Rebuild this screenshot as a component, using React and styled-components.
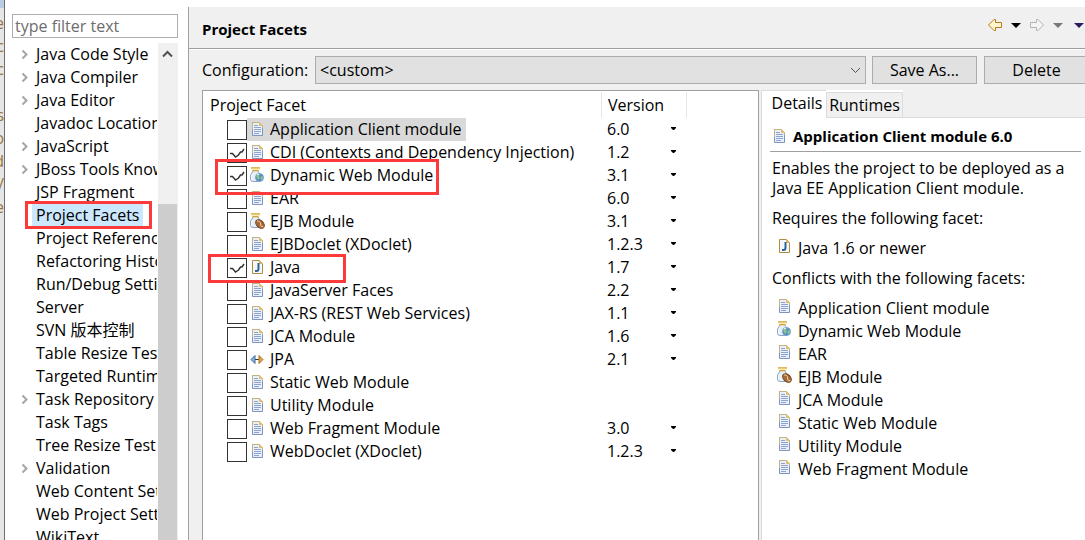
import React from 'react';
import styled, { createGlobalStyle } from 'styled-components';

const GlobalStyle = createGlobalStyle`
    * {
        box-sizing: border-box;
    }

    body {
        margin: 0;
        background: #fff;
    }

    body, button, input, select, table {
        font-family: "Open Sans", "Noto Sans CJK SC", sans-serif;
        font-size: 16px;
        line-height: 20px;
        color: #000;
    }
`;

const Window = styled.div`
    display: flex;
    height: 100vh;
    overflow: hidden;
`;

/* sliver of the editor that lies behind the dialog */
const Backdrop = styled.div`
    flex: none;
    width: 5px;
    padding-top: 12px;
    overflow: hidden;
    border-right: 1px solid #6e6e6e;
    background: linear-gradient(#b9cce2 8px, #e6e6e6 8px);
`;

const BackdropLine = styled.div`
    display: flex;
    justify-content: flex-end;
    height: 23px;
    line-height: 23px;
    color: #97753c;
`;

const Sidebar = styled.nav`
    display: flex;
    flex: none;
    flex-direction: column;
    width: 183px;
    padding: 14px 10px 0 7px;
`;

const Filter = styled.input`
    flex: none;
    width: 100%;
    height: 24px;
    margin-bottom: 5px;
    padding: 0 2px;
    border: 1px solid #abadb3;
    border-radius: 0;
    outline: 0;

    &::placeholder {
        color: #6d6d6d;
        opacity: 1;
    }
`;

const TreeArea = styled.div`
    display: flex;
    flex: 1;
    min-height: 0;
`;

const Tree = styled.ul`
    flex: 1;
    min-width: 0;
    margin: 0 1px 0 0;
    padding: 0;
    overflow: hidden;
    list-style: none;
`;

const TreeItem = styled.li`
    position: relative;
    display: flex;
    align-items: center;
    height: 23px;
    padding-left: 9px;
    white-space: nowrap;
`;

const Twisty = styled.span`
    display: flex;
    flex: none;
    width: 11px;
`;

const TreeLabel = styled.span`
    padding: 0 4px;
    line-height: 23px;
    background: ${({ $selected }) => ($selected ? '#cce8ff' : 'transparent')};
`;

const ScrollBar = styled.div`
    display: flex;
    flex: none;
    flex-direction: column;
    width: 20px;
    padding-right: 1px;
    background: #f0f0f0;
`;

const ScrollUp = styled.button`
    display: flex;
    flex: none;
    align-items: flex-start;
    justify-content: center;
    height: 161px;
    padding: 7px 0 0;
    border: 0;
    background: none;
`;

const ScrollThumb = styled.div`
    flex: 1;
    background: #cdcdcd;
`;

const Marker = styled.span`
    position: absolute;
    z-index: 1;
    border: 3px solid #fd3a3a;
    pointer-events: none;
`;

const TreeMarker = styled(Marker)`
    inset: -3px 5px -2px 13px;
`;

const WebMarker = styled(Marker)`
    inset: -5px 163px -8px 12px;
`;

const JavaMarker = styled(Marker)`
    inset: -2px 256px -4px 5px;
`;

const Page = styled.main`
    display: flex;
    flex: 1;
    flex-direction: column;
    min-width: 0;
    margin-top: 7px;
    border-left: 1px solid #a0a0a0;
    background: #f0f0f0;
    overflow: hidden;
`;

const PageHeader = styled.header`
    display: flex;
    flex: none;
    align-items: center;
    justify-content: space-between;
    height: 42px;
    padding: 0 0 0 13px;
    border-bottom: 1px solid #a0a0a0;
    box-shadow: 0 1px #fff;
`;

const PageTitle = styled.h1`
    margin: 0;
    padding-top: 2px;
    font-size: 15px;
    font-weight: 700;
`;

const HistoryBar = styled.div`
    display: flex;
    align-items: center;
    gap: 8px;
    padding: 0 1px 5px 0;

    > :last-child {
        margin-left: 3px;
    }
`;

const ToolButton = styled.button`
    display: flex;
    align-items: center;
    padding: 0;
    border: 0;
    background: none;
`;

const ConfigBar = styled.div`
    display: flex;
    flex: none;
    align-items: center;
    height: 28px;
    margin: 7px -4px 6px 13px;
`;

const ConfigLabel = styled.label`
    flex: none;
    width: 113px;
`;

const SelectBox = styled.div`
    display: grid;
    flex: 1;
    align-items: center;
    margin-right: 6px;

    > * {
        grid-area: 1 / 1;
    }

    svg {
        justify-self: end;
        margin-right: 5px;
        pointer-events: none;
    }
`;

const Select = styled.select`
    width: 100%;
    height: 28px;
    padding: 0 4px;
    border: 1px solid #acacac;
    border-radius: 0;
    background: #e1e1e1;
    appearance: none;
`;

const PushButton = styled.button`
    flex: none;
    width: 105px;
    height: 28px;
    padding: 0;
    border: 1px solid #acacac;
    background: #e1e1e1;

    & + & {
        margin-left: 7px;
    }
`;

const Columns = styled.div`
    display: grid;
    flex: 1;
    grid-template-columns: minmax(0, 557fr) minmax(0, 324fr);
    gap: 2px;
    min-height: 0;
    padding-left: 13px;
`;

const FacetPanel = styled.section`
    border: 1px solid #a0a0a0;
    border-bottom: 0;
    background: #fff;
`;

const FacetTable = styled.table`
    width: 100%;
    border-collapse: collapse;
    table-layout: fixed;

    th, td {
        padding: 0;
        text-align: left;
        white-space: nowrap;
    }
`;

const HeadCell = styled.th`
    width: ${({ $width }) => $width};
    height: 27px;
    font-weight: 400;

    > span {
        display: block;
        height: 26px;
        padding-left: ${({ $indent }) => $indent};
        border-right: 1px solid ${({ $last }) => ($last ? 'transparent' : '#e5e5e5')};
        line-height: 26px;
    }
`;

const FacetCell = styled.td`
    position: relative;
    height: 23px;
`;

const FacetRow = styled.div`
    display: flex;
    align-items: center;
    height: 23px;
    padding-left: 24px;
`;

const Tick = styled.input`
    flex: none;
    width: 20px;
    height: 20px;
    margin: 0;
    border: 1px solid #333;
    background: #fff;
    appearance: none;

    &:checked {
        background: #fff url("data:image/svg+xml,%3Csvg xmlns='http://www.w3.org/2000/svg' viewBox='0 0 18 18'%3E%3Cpath d='M2 9.500h2.500l3 3.500 3-2 2-3h1.500l2-3' fill='none' stroke='%23333' stroke-width='1.500'/%3E%3C/svg%3E");
    }
`;

const FacetLabel = styled.label`
    display: flex;
    align-items: center;
    gap: 5px;
    height: 23px;
    padding: 0 4px 2px 2px;
    background: ${({ $selected }) => ($selected ? '#d9d9d9' : 'transparent')};
`;

const VersionBox = styled.div`
    display: flex;
    align-items: center;
    justify-content: space-between;
    padding: 0 11px 2px 5px;
`;

const Folder = styled.section`
    display: flex;
    flex-direction: column;
    border-left: 1px solid #dcdcdc;
    background: #fff;
`;

const TabBar = styled.div`
    display: flex;
    align-items: stretch;
    height: 28px;
`;

const Tab = styled.button`
    flex: none;
    width: ${({ $active }) => ($active ? '64px' : '77px')};
    padding: ${({ $active }) => ($active ? '0 0 4px 6px' : '0')};
    border: 1px solid #dcdcdc;
    border-width: ${({ $active }) => ($active ? '1px 0 0' : '1px')};
    margin-top: ${({ $active }) => ($active ? '0' : '2px')};
    background: ${({ $active }) => ($active ? '#fff' : '#f0f0f0')};
    white-space: nowrap;
`;

const TabFill = styled.div`
    flex: 1;
    border-bottom: 1px solid #dcdcdc;
    background: #f0f0f0;
`;

const Details = styled.div`
    padding: 8px 4px 0 8px;
`;

const DetailsTitle = styled.h2`
    display: flex;
    align-items: center;
    gap: 6px;
    height: 26px;
    margin: 0 0 6px;
    padding: 0 0 6px 1px;
    border-bottom: 1px solid #a0a0a0;
    font-size: 15px;
    font-weight: 700;
`;

const Paragraph = styled.p`
    margin: 0 0 10px;
    padding-left: 2px;
`;

const FacetList = styled.ul`
    margin: -2px 0 9px;
    padding: 0 0 0 6px;
    list-style: none;
`;

const FacetListItem = styled.li`
    display: flex;
    align-items: center;
    gap: 6px;
    height: 23px;

    svg {
        margin-bottom: 4px;
    }
`;

const Icon = styled.svg`
    display: block;
    flex: none;
`;

const DocIcon = () => (
    <Icon width="16" height="16" viewBox="0 0 16 16">
        <path d="M3.500 1.500h7l3 3v10h-10z" fill="#e9f0fb" stroke="#7f93bd" />
        <path d="M3.500 9V1.500h7l3 3V7" fill="none" stroke="#c5b27c" />
        <path d="M10 1l4 4h-4z" fill="#e3c172" />
        <path d="M5 4.500h4M5 6.500h7M5 8.500h7M5 10.500h7M5 12.500h5" stroke="#8ea4d0" />
    </Icon>
);

const JavaIcon = () => (
    <Icon width="16" height="16" viewBox="0 0 16 16">
        <path d="M3.500 1.500h7l3 3v10h-10z" fill="#f4f7fd" stroke="#b08c3c" />
        <path d="M10 1l4 4h-4z" fill="#dfb964" />
        <path d="M9.500 4v5.500q0 2.500-2 2.500H6" fill="none" stroke="#2c6496" strokeWidth="2" />
    </Icon>
);

const Jar = () => (
    <>
        <path d="M4 3.500C4 6 1.500 6 1.500 9v3q0 2.500 2.500 2.500h5q2.500 0 2.500-2.500V9C11.500 6 9 6 9 3.500z" fill="#e6eff8" stroke="#8ba6c4" />
        <path d="M3 8q-1 3 0 5" fill="none" stroke="#fff" />
        <path d="M2 1h9M3.500 3.500h6" stroke="#d5a32c" strokeWidth="1.500" />
        <path d="M2 2.200h9" stroke="#fff0b0" />
    </>
);

const WebIcon = () => (
    <Icon width="16" height="16" viewBox="0 0 16 16">
        <Jar />
        <circle cx="10.500" cy="10.500" r="4" fill="#4f8cc4" stroke="#7da4cc" />
        <path d="M7 9q2-3 4-2l-1 2 1 2-2 2zM12 9l2.500 1-2 3.500-1-2z" fill="#8cc492" />
        <path d="M8 8q1-1 2-1" stroke="#eaf5fc" fill="none" />
    </Icon>
);

const EjbIcon = () => (
    <Icon width="16" height="16" viewBox="0 0 16 16">
        <Jar />
        <ellipse cx="11" cy="11" rx="5" ry="3.500" transform="rotate(45 11 11)" fill="#a76b3b" stroke="#74431d" />
        <path d="M8 8q4 0 3.500 3t3 3" fill="none" stroke="#f0cfa3" />
    </Icon>
);

const JpaIcon = () => (
    <Icon width="16" height="16" viewBox="0 0 16 16">
        <path d="M5 8.500h6" stroke="#333" />
        <path d="M2 8.500l4-4v8z" fill="#86b7e3" stroke="#3c6a9c" />
        <path d="M14 8.500l-4-4v8z" fill="#e3a544" stroke="#a97421" />
    </Icon>
);

const ICONS = {
    doc: DocIcon,
    java: JavaIcon,
    web: WebIcon,
    ejb: EjbIcon,
    jpa: JpaIcon,
};

const FacetIcon = ({ type }) => {
    const Type = ICONS[type];
    return <Type />;
};

const Triangle = ({ color = '#000' }) => (
    <Icon width="10" height="5" viewBox="0 0 10 5">
        <path d="M0 0h10L5 5z" fill={color} />
    </Icon>
);

const Arrow = ({ flip, stroke, fill }) => (
    <Icon width="16" height="14" viewBox="0 0 16 14">
        <path
            d="M1.500 7L7 1.500h1.500v3h6v5h-6v3H7z"
            transform={flip ? 'matrix(-1 0 0 1 16 0)' : undefined}
            fill={fill}
            stroke={stroke}
            strokeLinejoin="round"
        />
    </Icon>
);

const backdropText = ['e', 'c', 'c', '', 's', 'o', 'd', '/', 'e'];

const tree = [
    { name: 'Java Code Style', parent: true },
    { name: 'Java Compiler', parent: true },
    { name: 'Java Editor', parent: true },
    { name: 'Javadoc Location' },
    { name: 'JavaScript', parent: true },
    { name: 'JBoss Tools Knowledge', parent: true },
    { name: 'JSP Fragment' },
    { name: 'Project Facets', selected: true },
    { name: 'Project References' },
    { name: 'Refactoring History' },
    { name: 'Run/Debug Settings' },
    { name: 'Server' },
    { name: 'SVN 版本控制' },
    { name: 'Table Resize Test' },
    { name: 'Targeted Runtimes' },
    { name: 'Task Repository', parent: true },
    { name: 'Task Tags' },
    { name: 'Tree Resize Test' },
    { name: 'Validation', parent: true },
    { name: 'Web Content Settings' },
    { name: 'Web Project Settings' },
    { name: 'WikiText' },
];

const facets = [
    { name: 'Application Client module', version: '6.0', icon: 'doc', selected: true },
    { name: 'CDI (Contexts and Dependency Injection)', version: '1.2', icon: 'doc', checked: true },
    { name: 'Dynamic Web Module', version: '3.1', icon: 'web', checked: true, marker: WebMarker },
    { name: 'EAR', version: '6.0', icon: 'doc' },
    { name: 'EJB Module', version: '3.1', icon: 'ejb' },
    { name: 'EJBDoclet (XDoclet)', version: '1.2.3', icon: 'doc' },
    { name: 'Java', version: '1.7', icon: 'java', checked: true, marker: JavaMarker },
    { name: 'JavaServer Faces', version: '2.2', icon: 'doc' },
    { name: 'JAX-RS (REST Web Services)', version: '1.1', icon: 'doc' },
    { name: 'JCA Module', version: '1.6', icon: 'doc' },
    { name: 'JPA', version: '2.1', icon: 'jpa' },
    { name: 'Static Web Module', icon: 'doc' },
    { name: 'Utility Module', icon: 'doc' },
    { name: 'Web Fragment Module', version: '3.0', icon: 'doc' },
    { name: 'WebDoclet (XDoclet)', version: '1.2.3', icon: 'doc' },
];

const conflicts = [
    { name: 'Application Client module', icon: 'doc' },
    { name: 'Dynamic Web Module', icon: 'web' },
    { name: 'EAR', icon: 'doc' },
    { name: 'EJB Module', icon: 'ejb' },
    { name: 'JCA Module', icon: 'doc' },
    { name: 'Static Web Module', icon: 'doc' },
    { name: 'Utility Module', icon: 'doc' },
    { name: 'Web Fragment Module', icon: 'doc' },
];

const PreferenceTree = () => (
    <Sidebar>
        <Filter type="text" placeholder="type filter text" aria-label="type filter text" />
        <TreeArea>
            <Tree>
                {tree.map(({ name, parent, selected }) => (
                    <TreeItem key={name}>
                        <Twisty>
                            {parent && (
                                <Icon width="7" height="11" viewBox="0 0 7 11">
                                    <path d="M1.500 1.500l4 4-4 4" fill="none" stroke="#a6a6a6" strokeWidth="2" />
                                </Icon>
                            )}
                        </Twisty>
                        <TreeLabel $selected={selected}>{name}</TreeLabel>
                        {selected && <TreeMarker />}
                    </TreeItem>
                ))}
            </Tree>
            <ScrollBar>
                <ScrollUp aria-label="Scroll up">
                    <Icon width="11" height="8" viewBox="0 0 11 8">
                        <path d="M1 6.500l4.500-4.500L10 6.500" fill="none" stroke="#505050" strokeWidth="2" />
                    </Icon>
                </ScrollUp>
                <ScrollThumb />
            </ScrollBar>
        </TreeArea>
    </Sidebar>
);

const FacetsTable = () => (
    <FacetPanel>
        <FacetTable>
            <thead>
                <tr>
                    <HeadCell $width="399px" $indent="7px"><span>Project Facet</span></HeadCell>
                    <HeadCell $width="85px" $indent="6px"><span>Version</span></HeadCell>
                    <HeadCell $last><span /></HeadCell>
                </tr>
            </thead>
            <tbody>
                {facets.map(({ name, version, icon, checked, selected, marker: RowMarker }) => (
                    <tr key={name}>
                        <FacetCell>
                            <FacetRow>
                                <Tick type="checkbox" id={name} defaultChecked={checked} />
                                <FacetLabel htmlFor={name} $selected={selected}>
                                    <FacetIcon type={icon} />
                                    {name}
                                </FacetLabel>
                            </FacetRow>
                            {RowMarker && <RowMarker />}
                        </FacetCell>
                        <td>
                            {version && (
                                <VersionBox>
                                    {version}
                                    <ToolButton aria-label={`${name} version`}>
                                        <Icon width="5" height="3" viewBox="0 0 5 3">
                                            <path d="M0 0h5v1L3 3H2L0 1z" />
                                        </Icon>
                                    </ToolButton>
                                </VersionBox>
                            )}
                        </td>
                        <td />
                    </tr>
                ))}
            </tbody>
        </FacetTable>
    </FacetPanel>
);

const DetailsFolder = () => (
    <Folder>
        <TabBar>
            <Tab $active>Details</Tab>
            <Tab>Runtimes</Tab>
            <TabFill />
        </TabBar>
        <Details>
            <DetailsTitle>
                <DocIcon />
                Application Client module 6.0
            </DetailsTitle>
            <Paragraph>Enables the project to be deployed as a Java EE Application Client module.</Paragraph>
            <Paragraph>Requires the following facet:</Paragraph>
            <FacetList>
                <FacetListItem>
                    <JavaIcon />
                    Java 1.6 or newer
                </FacetListItem>
            </FacetList>
            <Paragraph>Conflicts with the following facets:</Paragraph>
            <FacetList>
                {conflicts.map(({ name, icon }) => (
                    <FacetListItem key={name}>
                        <FacetIcon type={icon} />
                        {name}
                    </FacetListItem>
                ))}
            </FacetList>
        </Details>
    </Folder>
);

const App = () => (
    <>
        <GlobalStyle />
        <Window>
            <Backdrop aria-hidden="true">
                {backdropText.map((text, i) => (
                    <BackdropLine key={i}>{text}</BackdropLine>
                ))}
            </Backdrop>
            <PreferenceTree />
            <Page>
                <PageHeader>
                    <PageTitle>Project Facets</PageTitle>
                    <HistoryBar>
                        <ToolButton aria-label="Back"><Arrow stroke="#b8791d" fill="#fff6d0" /></ToolButton>
                        <ToolButton aria-label="Back history"><Triangle /></ToolButton>
                        <ToolButton aria-label="Forward"><Arrow flip stroke="#b4b4b4" fill="#f4f4f4" /></ToolButton>
                        <ToolButton aria-label="Forward history"><Triangle color="#787878" /></ToolButton>
                        <ToolButton aria-label="Menu"><Triangle color="#2e1a5c" /></ToolButton>
                    </HistoryBar>
                </PageHeader>
                <ConfigBar>
                    <ConfigLabel htmlFor="configuration">Configuration:</ConfigLabel>
                    <SelectBox>
                        <Select id="configuration">
                            <option>&lt;custom&gt;</option>
                        </Select>
                        <Icon width="11" height="7" viewBox="0 0 11 7">
                            <path d="M1 1l4.500 4.500L10 1" fill="none" stroke="#505050" />
                        </Icon>
                    </SelectBox>
                    <PushButton>Save As...</PushButton>
                    <PushButton>Delete</PushButton>
                </ConfigBar>
                <Columns>
                    <FacetsTable />
                    <DetailsFolder />
                </Columns>
            </Page>
        </Window>
    </>
);

export default App;
